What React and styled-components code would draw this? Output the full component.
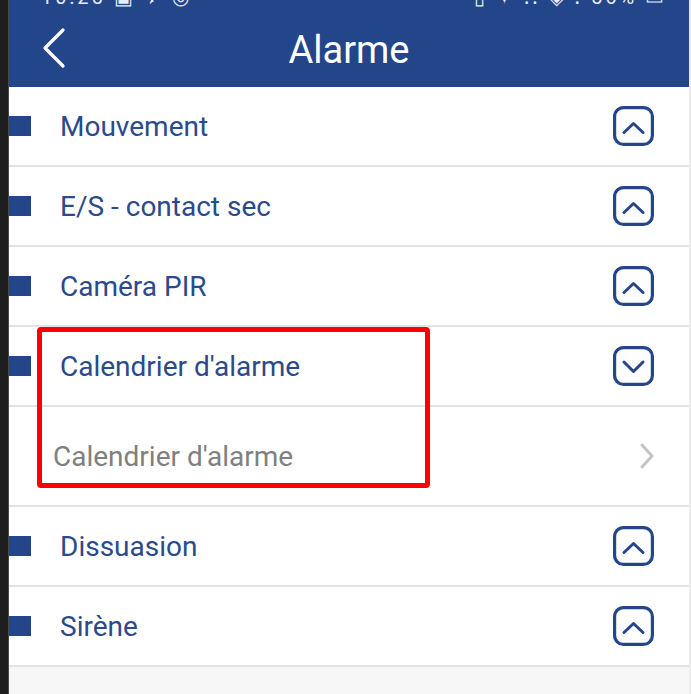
import React from "react";
import styled, { createGlobalStyle } from "styled-components";

const Global = createGlobalStyle`
  html, body { margin: 0; padding: 0; background: #1f1f1f; }
  body { font-family: Roboto, "Noto Sans", "Liberation Sans", sans-serif; }
  * { box-sizing: border-box; }
`;

const Page = styled.div`
  display: flex;
  width: 691px;
  height: 694px;
  overflow: hidden;
`;

const Strip = styled.div`
  width: 9px;
  flex: none;
  background: #1e1e1e;
  border-right: 1px solid #4a4a4a;
`;

const Main = styled.div`
  flex: 1;
  display: flex;
  flex-direction: column;
  background: #f7f7f7;
  border-right: 2px solid #ececec;
`;

const Header = styled.header`
  height: 87px;
  background: #23458a;
  display: flex;
  flex-direction: column;
  color: #fff;
`;

const StatusBar = styled.div`
  height: 8px;
  overflow: hidden;
  display: flex;
  justify-content: space-between;
  padding: 0 22px 0 32px;
`;

const StatusText = styled.span`
  font-size: 20px;
  line-height: 20px;
  margin-top: -13px;
  letter-spacing: 3px;
  opacity: 0.9;
`;

const NavBar = styled.div`
  flex: 1;
  display: grid;
  grid-template-columns: 80px 1fr 80px;
  align-items: center;
`;

const Back = styled.div`
  display: flex;
  padding-left: 32px;
  align-items: center;
`;

const Title = styled.h1`
  margin: 0;
  text-align: center;
  font-weight: 400;
  font-size: 38px;
  line-height: 1;
  margin-top: 5px;
`;

const List = styled.div`
  display: flex;
  flex-direction: column;
  background: #fff;
`;

const Row = styled.div`
  height: ${(p) => (p.$tall ? 100 : 80)}px;
  border-bottom: 2px solid #e3e3e3;
  display: flex;
  align-items: center;
  padding-right: ${(p) => (p.$tall ? 34 : 35)}px;
  padding-left: ${(p) => (p.$tall ? 44 : 0)}px;
`;

const Bullet = styled.span`
  width: 22px;
  height: 20px;
  background: #23458a;
  flex: none;
  margin-right: 29px;
`;

const Label = styled.span`
  flex: 1;
  font-size: 28px;
  color: ${(p) => (p.$muted ? "#808080" : "#2b4a8a")};
`;

const Group = styled.div`
  position: relative;
`;

const Highlight = styled.div`
  position: absolute;
  left: 28px;
  top: 0;
  width: 393px;
  height: 161px;
  border: 5px solid #ff0000;
  border-radius: 4px;
  pointer-events: none;
`;

const Filler = styled.div`
  flex: 1;
  background: #f7f7f7;
`;

const ToggleIcon = ({ down }) => (
  <svg width="41" height="40" viewBox="0 0 41 40" fill="none">
    <rect x="1.6" y="1.6" width="37.8" height="36.8" rx="9" stroke="#26468a" strokeWidth="3.2" />
    <path
      d={down ? "M11 16 L20.5 25.5 L30 16" : "M11 26.5 L20.5 17.5 L30 26.5"}
      stroke="#26468a"
      strokeWidth="3"
      strokeLinecap="round"
      strokeLinejoin="round"
    />
  </svg>
);

const ChevronRight = () => (
  <svg width="16" height="26" viewBox="0 0 16 26" fill="none">
    <path d="M3 2 L13 13 L3 24" stroke="#c4c4c4" strokeWidth="3" strokeLinecap="round" strokeLinejoin="round" />
  </svg>
);

const BackIcon = () => (
  <svg width="26" height="42" viewBox="0 0 26 42" fill="none">
    <path d="M22 3 L4 21 L22 39" stroke="#fff" strokeWidth="3.2" strokeLinecap="round" strokeLinejoin="round" />
  </svg>
);

const Item = ({ label, open }) => (
  <Row>
    <Bullet />
    <Label>{label}</Label>
    <ToggleIcon down={open} />
  </Row>
);

export default function App() {
  return (
    <>
      <Global />
      <Page>
        <Strip />
        <Main>
          <Header>
            <StatusBar>
              <StatusText>10:25 ▣ ✈ ◎</StatusText>
              <StatusText>▯ ✦ ⁞⁞ ◈ ⁞ 56% ▭</StatusText>
            </StatusBar>
            <NavBar>
              <Back>
                <BackIcon />
              </Back>
              <Title>Alarme</Title>
              <div />
            </NavBar>
          </Header>
          <List>
            <Item label="Mouvement" />
            <Item label="E/S - contact sec" />
            <Item label="Caméra PIR" />
            <Group>
              <Item label="Calendrier d'alarme" open />
              <Row $tall>
                <Label $muted>Calendrier d'alarme</Label>
                <ChevronRight />
              </Row>
              <Highlight />
            </Group>
            <Item label="Dissuasion" />
            <Item label="Sirène" />
          </List>
          <Filler />
        </Main>
      </Page>
    </>
  );
}
